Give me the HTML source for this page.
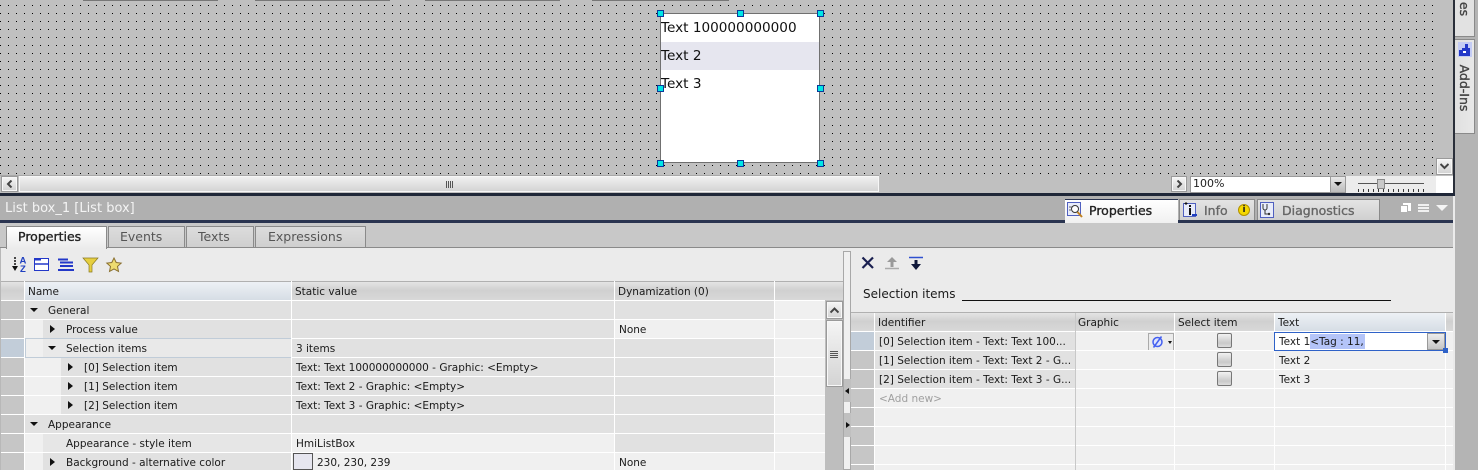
<!DOCTYPE html>
<html><head><meta charset="utf-8"><style>
html,body{margin:0;padding:0}
#r{position:relative;width:1478px;height:470px;overflow:hidden;background:#ebebeb;font:10.5px "DejaVu Sans","Liberation Sans",sans-serif;color:#1a1a1a}
#r div,#r span,#r svg{position:absolute;box-sizing:border-box}
.t{white-space:nowrap;line-height:14px;margin-top:1px}
.b{-webkit-text-stroke:.35px currentColor}
.h{background:linear-gradient(#e4e4e4,#d0d0d0 45%,#d8d8d8);height:18px}
.bt{background:linear-gradient(#f4f4f4,#d4d4d4);border:2px solid #f8f8f8;outline:1px solid #9a9a9a;outline-offset:-1px}
.tab{top:226px;height:21px;background:linear-gradient(#dcdcdc,#cfcfcf);border:1px solid #8a8a8a;border-bottom:0}
.tt{top:229px;font-size:12.5px;color:#555}
.hd{background:#c6c6c6}
.tri{width:0;height:0}
.d{border-left:4px solid transparent;border-right:4px solid transparent;border-top:4px solid #111}
.ri{border-top:4px solid transparent;border-bottom:4px solid transparent;border-left:5px solid #111}
.s{width:7px;height:7px;background:#00e6e6;border:1px solid #0a3a9a}
.cb{width:15px;height:15px;border:1px solid #777;border-radius:2px;background:linear-gradient(#f2f2f2,#c9c9c9 70%,#ddd)}
</style></head><body><div id="r">

<!-- canvas -->
<div style="left:0;top:0;width:1453px;height:176px;background-color:#c0c0c0"></div>
<svg style="left:0;top:0" width="1436" height="176"><defs><pattern id="p" width="8" height="8" patternUnits="userSpaceOnUse"><rect x="0" y="5" width="1" height="1" fill="#000"/></pattern></defs><rect width="1436" height="176" fill="url(#p)"/></svg>
<div style="left:83px;top:0;width:135px;height:1px;background:#777"></div>
<div style="left:255px;top:0;width:135px;height:1px;background:#777"></div>
<div style="left:425px;top:0;width:135px;height:1px;background:#777"></div>
<div style="left:592px;top:0;width:137px;height:1px;background:#777"></div>

<!-- list box -->
<div style="left:660px;top:13px;width:160px;height:150px;background:#fff;border:1px solid #707070"></div>
<div style="left:661px;top:42px;width:158px;height:28px;background:#e6e6ef"></div>
<div class="t" style="left:661px;top:20px;font-size:13.6px;color:#111">Text 100000000000</div>
<div class="t" style="left:661px;top:48px;font-size:13.6px;color:#111">Text 2</div>
<div class="t" style="left:661px;top:76px;font-size:13.6px;color:#111">Text 3</div>
<div class="s" style="left:657px;top:10px"></div><div class="s" style="left:737px;top:10px"></div><div class="s" style="left:817px;top:10px"></div>
<div class="s" style="left:657px;top:85px"></div><div class="s" style="left:817px;top:85px"></div>
<div class="s" style="left:657px;top:160px"></div><div class="s" style="left:737px;top:160px"></div><div class="s" style="left:817px;top:160px"></div>

<!-- h scrollbar row -->
<div style="left:0;top:175px;width:1453px;height:18px;background:#c0c0c0"></div>
<div style="left:0;top:175px;width:879px;height:1px;background:#a8a8a8"></div>
<div class="bt" style="left:1px;top:176px;width:17px;height:16px"></div>
<svg style="left:6px;top:180px" width="8" height="8"><path d="M5.500 0.500 L2 4 L5.500 7.500" fill="none" stroke="#444" stroke-width="2"/></svg>
<div style="left:19px;top:176px;width:860px;height:16px;background:linear-gradient(#f0f0f0,#d4d4d4);border:1px solid #f6f6f6"></div>
<div style="left:446px;top:181px;width:8px;height:7px;background:repeating-linear-gradient(90deg,#555 0 1px,transparent 1px 2px)"></div>
<div class="bt" style="left:1171px;top:176px;width:16px;height:16px"></div>
<svg style="left:1175px;top:180px" width="8" height="8"><path d="M2.500 0.500 L6 4 L2.500 7.500" fill="none" stroke="#444" stroke-width="2"/></svg>
<div style="left:1190px;top:176px;width:156px;height:17px;background:#fff;border:1px solid #9a9a9a"></div>
<div class="t" style="left:1193px;top:176px;font-size:11px;color:#222">100%</div>
<div style="left:1330px;top:176px;width:16px;height:17px;background:linear-gradient(#e8e8e8,#bcbcbc);border:1px solid #9a9a9a"></div>
<div class="tri d" style="left:1334px;top:182px"></div>
<div style="left:1346px;top:176px;width:90px;height:17px;background:#ececec"></div>
<div style="left:1358px;top:183px;width:66px;height:1px;background:#555"></div>
<div style="left:1358px;top:189px;width:66px;height:3px;background:repeating-linear-gradient(90deg,#333 0 1px,transparent 1px 5px)"></div>
<div style="left:1377px;top:179px;width:8px;height:10px;background:#c8c8c8;border:1px solid #888"></div>
<div style="left:1436px;top:176px;width:17px;height:17px;background:#fff"></div>
<div class="bt" style="left:1436px;top:158px;width:17px;height:17px"></div>
<svg style="left:1440px;top:163px" width="9" height="7"><path d="M0.500 1 L4.500 5 L8.500 1" fill="none" stroke="#444" stroke-width="2"/></svg>

<!-- right vertical strip -->
<div style="left:1453px;top:0;width:2px;height:196px;background:#2a2f3a"></div>
<div style="left:1455px;top:0;width:23px;height:470px;background:#b4b4b4"></div>
<div style="left:1455px;top:0;width:20px;height:37px;background:#e2e2e2;border:1px solid #8a8a8a;border-top:0;border-left:0"></div>
<div style="left:1455px;top:39px;width:20px;height:95px;background:linear-gradient(90deg,#e0e0e0,#e8e8e8);border:1px solid #8a8a8a;border-left:0"></div>
<div class="t b" style="left:1464px;top:1px;font-size:12.5px;color:#444;transform:translate(-50%,0) rotate(90deg)">es</div>
<div class="t b" style="left:1464px;top:80px;font-size:12.5px;color:#444;transform:translate(-50%,0) rotate(90deg)">Add-Ins</div>
<svg style="left:1458px;top:42px" width="14" height="15"><rect width="14" height="15" fill="#c4ccf4"/><path d="M1 8h3V6h3V2h3v4h2v8H1z" fill="#2338c8"/><rect x="5" y="9" width="3" height="2" fill="#fff"/></svg>

<!-- dark bar + title -->
<div style="left:0;top:193px;width:1455px;height:3px;background:#1f2738"></div>
<div style="left:0;top:196px;width:1453px;height:24px;background:#b0b0b0"></div>
<div class="t" style="left:5px;top:201px;font-size:13px;color:#f4f4f4">List box_1 [List box]</div>
<div style="left:0;top:220px;width:1453px;height:3px;background:#2a3450"></div>

<!-- inspector tabs -->
<div style="left:1065px;top:199px;width:113px;height:24px;background:linear-gradient(#fff,#f0f0f0);border-top:1px solid #2a3450"></div>
<svg style="left:1067px;top:202px" width="16" height="16"><rect x="0.500" y="0.500" width="13" height="13" fill="#e8ecfa" stroke="#5060c0"/><circle cx="8" cy="7" r="3.500" fill="#fff" stroke="#333"/><path d="M10.500 10 L15 15" stroke="#c08020" stroke-width="2"/><path d="M2 5h3M2 8h3" stroke="#666"/></svg>
<div class="t b" style="left:1089px;top:203px;font-size:12.5px;color:#222">Properties</div>
<div style="left:1179px;top:199px;width:76px;height:21px;background:linear-gradient(#e4e4e4,#d0d0d0);border:1px solid #8a8a8a;border-bottom:0"></div>
<svg style="left:1182px;top:202px" width="16" height="16"><rect x="1.500" y="1.500" width="12" height="13" fill="#e8ecfa" stroke="#5060c0"/><path d="M4 3v-3M2.500 1.500h3" stroke="#111"/><rect x="7" y="6" width="2" height="7" fill="#111"/><rect x="7" y="3" width="2" height="2" fill="#111"/><path d="M10 13h5" stroke="#2040c0" stroke-width="2"/></svg>
<div class="t b" style="left:1204px;top:203px;font-size:12.5px;color:#666">Info</div>
<div style="left:1238px;top:204px;width:12px;height:12px;border-radius:50%;background:#f5d800;border:1px solid #b09000"></div>
<div class="t" style="left:1238px;top:202px;width:12px;text-align:center;font-size:9px;font-weight:bold;color:#222">i</div>
<div style="left:1257px;top:199px;width:123px;height:21px;background:linear-gradient(#e4e4e4,#d0d0d0);border:1px solid #8a8a8a;border-bottom:0"></div>
<svg style="left:1260px;top:202px" width="14" height="16"><rect x="0.500" y="0.500" width="13" height="15" fill="#e8ecfa" stroke="#5060c0"/><path d="M3 2v4a2 2 0 0 0 4 0V2M5 8v4h3" fill="none" stroke="#333"/><circle cx="9" cy="12" r="1.200" fill="#333"/></svg>
<div class="t b" style="left:1282px;top:203px;font-size:12.5px;color:#666">Diagnostics</div>
<div style="left:1403px;top:203px;width:8px;height:8px;background:#fff"></div><div style="left:1400px;top:205px;width:8px;height:8px;background:#fff;border:1px solid #b0b0b0"></div>
<div style="left:1418px;top:204px;width:11px;height:9px;background:repeating-linear-gradient(#f0f0f0 0 2px,#b0b0b0 2px 3px)"></div>
<div class="tri" style="left:1436px;top:205px;border-left:6px solid transparent;border-right:6px solid transparent;border-top:6px solid #f4f4f4"></div>

<!-- property tabs band -->
<div style="left:0;top:223px;width:1453px;height:25px;background:#c8c8c8"></div>
<div style="left:0;top:247px;width:1453px;height:1px;background:#8a8a8a"></div>
<div class="tab" style="left:6px;width:101px;height:23px;background:linear-gradient(#fff,#ebebeb);z-index:2"></div>
<div class="t tt b" style="left:18px;color:#222;z-index:3">Properties</div>
<div class="tab" style="left:108px;width:77px"></div><div class="t tt" style="left:120px">Events</div>
<div class="tab" style="left:186px;width:68px"></div><div class="t tt" style="left:198px">Texts</div>
<div class="tab" style="left:255px;width:111px"></div><div class="t tt" style="left:268px">Expressions</div>

<!-- left toolbar -->
<svg style="left:10px;top:255px" width="120" height="19">
<path d="M5 2v10" stroke="#111" stroke-dasharray="2 1" stroke-width="1.500"/><path d="M2 11l3 5 3-5z" fill="#111"/>
<text x="9.500" y="8.500" font-size="9.500" font-weight="bold" fill="#2040c0" font-family="Liberation Sans">A</text><text x="10" y="17" font-size="9.500" font-weight="bold" fill="#2040c0" font-family="Liberation Sans">Z</text>
<path d="M24.500 3.500h14v12h-14z" fill="#fff" stroke="#2338c8"/><path d="M25 4.500h6" stroke="#2338c8" stroke-width="2"/><path d="M25 9h13" stroke="#2338c8" stroke-width="1.500"/>
<path d="M48 4.500h10M50 7.500h13M50 11h13M48 15h16" stroke="#2338c8" stroke-width="2"/>
<path d="M73 3h15l-6 7v7h-3v-7z" fill="#e6cf40" stroke="#8a7a20" stroke-width="0.700"/>
<path d="M104 3l2.200 4.500 5 .6-3.700 3.300 1 5-4.500-2.500-4.500 2.500 1-5-3.700-3.300 5-.6z" fill="#eedc70" stroke="#8a7030"/>
</svg>

<!-- left table header -->
<div style="left:1px;top:281px;width:842px;height:1px;background:#b0b0b0"></div>
<div class="h" style="left:1px;top:282px;width:23px"></div>
<div class="h" style="left:25px;top:282px;width:266px;background:linear-gradient(#edf1f5,#d6dde5)"></div>
<div class="h" style="left:292px;top:282px;width:322px"></div>
<div class="h" style="left:615px;top:282px;width:159px"></div>
<div class="h" style="left:775px;top:282px;width:68px"></div>
<div class="t" style="left:28px;top:284px">Name</div>
<div class="t" style="left:295px;top:284px">Static value</div>
<div class="t" style="left:618px;top:284px">Dynamization (0)</div>

<!-- left rows -->
<div style="left:1px;top:301px;width:824px;height:169px;background:#f0f0f0"></div>
<div class="hd" style="left:1px;top:301px;width:24px;height:169px"></div>
<div style="left:25px;top:301px;width:266px;height:18px;background:#e1e1e1"></div>
<div style="left:43px;top:320px;width:248px;height:18px;background:#e1e1e1"></div>
<div style="left:43px;top:339px;width:248px;height:18px;background:#e9e9e9"></div>
<div style="left:61px;top:358px;width:230px;height:18px;background:#e1e1e1"></div>
<div style="left:61px;top:377px;width:230px;height:18px;background:#e1e1e1"></div>
<div style="left:61px;top:396px;width:230px;height:18px;background:#e1e1e1"></div>
<div style="left:25px;top:415px;width:266px;height:18px;background:#e1e1e1"></div>
<div style="left:43px;top:434px;width:248px;height:18px;background:#e6e6e6"></div>
<div style="left:43px;top:453px;width:248px;height:17px;background:#e1e1e1"></div>
<div style="left:292px;top:301px;width:322px;height:132px;background:#e1e1e1"></div>
<div style="left:615px;top:301px;width:159px;height:18px;background:#e1e1e1"></div>
<div style="left:615px;top:339px;width:159px;height:94px;background:#e1e1e1"></div>
<div style="left:615px;top:434px;width:159px;height:18px;background:#e1e1e1"></div>
<div style="left:1px;top:339px;width:24px;height:18px;background:#c2cdd9"></div>
<div style="left:1px;top:300px;width:824px;height:170px;background:repeating-linear-gradient(#fff 0 1px,transparent 1px 19px)"></div>
<div style="left:25px;top:338px;width:267px;height:20px;border:1px solid #c0ccd8"></div>
<div style="left:291px;top:281px;width:1px;height:189px;background:#fff"></div>
<div style="left:614px;top:281px;width:1px;height:189px;background:#fff"></div>
<div style="left:774px;top:281px;width:1px;height:189px;background:#fff"></div>
<div style="left:24px;top:281px;width:1px;height:189px;background:#fff"></div>

<div class="tri d" style="left:30px;top:308px"></div><div class="t" style="left:48px;top:303px">General</div>
<div class="tri ri" style="left:50px;top:325px"></div><div class="t" style="left:66px;top:322px">Process value</div>
<div class="tri d" style="left:48px;top:346px"></div><div class="t" style="left:66px;top:341px">Selection items</div>
<div class="tri ri" style="left:68px;top:363px"></div><div class="t" style="left:84px;top:360px">[0] Selection item</div>
<div class="tri ri" style="left:68px;top:382px"></div><div class="t" style="left:84px;top:379px">[1] Selection item</div>
<div class="tri ri" style="left:68px;top:401px"></div><div class="t" style="left:84px;top:398px">[2] Selection item</div>
<div class="tri d" style="left:30px;top:422px"></div><div class="t" style="left:48px;top:417px">Appearance</div>
<div class="t" style="left:66px;top:436px">Appearance - style item</div>
<div class="tri ri" style="left:50px;top:458px"></div><div class="t" style="left:66px;top:455px">Background - alternative color</div>
<div class="t" style="left:296px;top:341px">3 items</div>
<div class="t" style="left:296px;top:360px">Text: Text 100000000000 - Graphic: &lt;Empty&gt;</div>
<div class="t" style="left:296px;top:379px">Text: Text 2 - Graphic: &lt;Empty&gt;</div>
<div class="t" style="left:296px;top:398px">Text: Text 3 - Graphic: &lt;Empty&gt;</div>
<div class="t" style="left:296px;top:436px">HmiListBox</div>
<div style="left:293px;top:453px;width:20px;height:17px;background:#e6e6ef;border:1px solid #555"></div>
<div class="t" style="left:317px;top:455px">230, 230, 239</div>
<div class="t" style="left:619px;top:322px">None</div>
<div class="t" style="left:619px;top:455px">None</div>

<!-- left scrollbar -->
<div style="left:825px;top:300px;width:18px;height:170px;background:#bebebe"></div>
<div class="bt" style="left:826px;top:301px;width:17px;height:18px"></div>
<svg style="left:830px;top:307px" width="9" height="7"><path d="M0.500 5.500 L4.500 1.500 L8.500 5.500" fill="none" stroke="#444" stroke-width="2"/></svg>
<div class="bt" style="left:826px;top:320px;width:17px;height:67px"></div>
<div style="left:830px;top:351px;width:8px;height:7px;background:repeating-linear-gradient(#555 0 1px,transparent 1px 2px)"></div>

<!-- splitter -->
<div style="left:843px;top:251px;width:8px;height:219px;background:#f0f0f0;border:1px solid #a8a8a8"></div>
<div style="left:843px;top:379px;width:8px;height:23px;background:#c0c0c0;border-left:1px solid #a8a8a8"></div>
<div style="left:843px;top:413px;width:8px;height:24px;background:#c0c0c0;border-left:1px solid #a8a8a8"></div>
<div class="tri" style="left:845px;top:388px;border-top:3px solid transparent;border-bottom:3px solid transparent;border-right:4px solid #111"></div>
<div class="tri" style="left:846px;top:422px;border-top:3px solid transparent;border-bottom:3px solid transparent;border-left:4px solid #111"></div>

<!-- right toolbar -->
<svg style="left:860px;top:255px" width="70" height="17">
<path d="M2.500 2.500 L13 13 M13 2.500 L2.500 13" stroke="#1a2050" stroke-width="2.200"/>
<path d="M32 2l-5 5h3.500v5h3v-5h3.500z" fill="#999"/><path d="M25 13.500h14" stroke="#aaa" stroke-width="1.500"/>
<path d="M49 2.500h14" stroke="#2f50d0" stroke-width="1.500"/><path d="M54.500 5v4h-3.500l5 6 5-6h-3.500v-4z" fill="#10183a"/>
</svg>
<div class="t" style="left:863px;top:286px;font-size:12px">Selection items</div>
<div style="left:962px;top:300px;width:429px;height:1px;background:#111"></div>

<!-- right header -->
<div style="left:851px;top:312px;width:602px;height:1px;background:#b0b0b0"></div>
<div class="h" style="left:851px;top:313px;width:23px"></div>
<div class="h" style="left:875px;top:313px;width:200px"></div>
<div class="h" style="left:1076px;top:313px;width:98px"></div>
<div class="h" style="left:1175px;top:313px;width:99px"></div>
<div class="h" style="left:1275px;top:313px;width:170px;background:linear-gradient(#edf1f5,#d6dde5)"></div>
<div class="h" style="left:1446px;top:313px;width:7px"></div>
<div class="t" style="left:878px;top:315px">Identifier</div>
<div class="t" style="left:1078px;top:315px">Graphic</div>
<div class="t" style="left:1178px;top:315px">Select item</div>
<div class="t" style="left:1278px;top:315px">Text</div>

<!-- right rows -->
<div style="left:851px;top:332px;width:602px;height:138px;background:#f0f0f0"></div>
<div class="hd" style="left:851px;top:332px;width:24px;height:138px"></div>
<div style="left:851px;top:332px;width:24px;height:18px;background:#c2cdd9"></div>
<div style="left:875px;top:332px;width:200px;height:56px;background:#e1e1e1"></div>
<div style="left:851px;top:331px;width:602px;height:139px;background:repeating-linear-gradient(#fff 0 1px,transparent 1px 19px)"></div>
<div style="left:874px;top:313px;width:1px;height:157px;background:#fff"></div>
<div style="left:1075px;top:313px;width:1px;height:157px;background:#c8c8c8"></div>
<div style="left:1174px;top:313px;width:1px;height:157px;background:#fff"></div>
<div style="left:1274px;top:313px;width:1px;height:157px;background:#fff"></div>
<div style="left:1445px;top:313px;width:1px;height:157px;background:#fff"></div>
<div class="t" style="left:879px;top:334px">[0] Selection item - Text: Text 100...</div>
<div class="t" style="left:879px;top:353px">[1] Selection item - Text: Text 2 - G...</div>
<div class="t" style="left:879px;top:372px">[2] Selection item - Text: Text 3 - G...</div>
<div class="t" style="left:879px;top:391px;color:#a0a0a0">&lt;Add new&gt;</div>
<div style="left:1148px;top:333px;width:26px;height:17px;background:#ececec;border:1px solid #aaa;border-bottom:0"></div>
<svg style="left:1151px;top:335px" width="14" height="14"><circle cx="6.500" cy="7" r="4.500" fill="#dfe4fc" stroke="#4460f0" stroke-width="1.500"/><path d="M2.500 12.500 L10.500 1.500" stroke="#4460f0" stroke-width="1.500"/></svg>
<div class="tri d" style="left:1168px;top:341px;border-left-width:2.500px;border-right-width:2.500px;border-top-width:3px"></div>
<div class="cb" style="left:1217px;top:333px"></div>
<div class="cb" style="left:1217px;top:352px"></div>
<div class="cb" style="left:1217px;top:371px"></div>
<div style="left:1274px;top:332px;width:172px;height:19px;background:#fff;border:1px solid #2f62c8"></div>
<div style="left:1310px;top:334px;width:55px;height:15px;background:#b4c4f8"></div>
<div class="t" style="left:1279px;top:334px">Text 1&lt;Tag : 11,</div>
<div style="left:1427px;top:333px;width:18px;height:17px;background:linear-gradient(#ececec,#c4c4c4);border:1px solid #999"></div>
<div class="tri d" style="left:1432px;top:340px"></div>
<div style="left:1443px;top:348px;width:5px;height:5px;background:#2f62c8"></div>
<div class="t" style="left:1279px;top:353px">Text 2</div>
<div class="t" style="left:1279px;top:372px">Text 3</div>
<div style="left:0;top:248px;width:1px;height:222px;background:#b8b8b8"></div>
</div></body></html>
